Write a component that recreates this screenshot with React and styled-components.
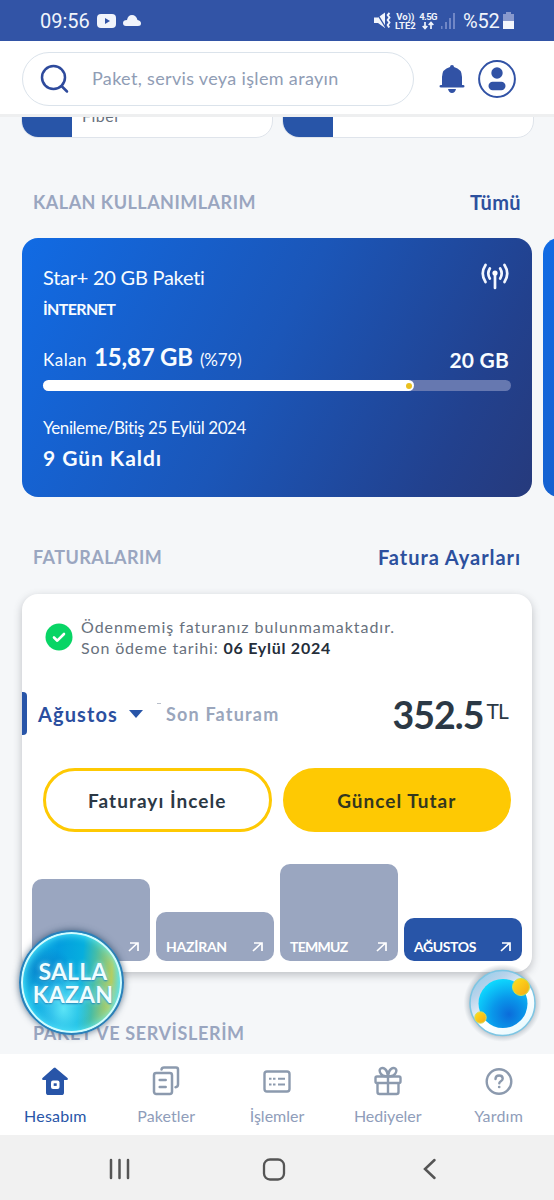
import React from 'react';
import styled, { createGlobalStyle, ThemeProvider } from 'styled-components';

const theme = {
  blue: '#2855a8',
  statusBlue: '#3254a6',
  gray: '#9aa6c0',
  dark: '#2b3845',
  yellow: '#fec903',
  background: '#f5f7f9',
};

const GlobalStyle = createGlobalStyle`
  * { box-sizing: border-box; }
  body {
    margin: 0;
    font-family: Lato, 'Open Sans', sans-serif;
    background: ${theme.background};
  }
  svg { display: block; flex-shrink: 0; }
`;

const Screen = styled.div`
  display: flex;
  flex-direction: column;
  position: relative;
  width: 554px;
  height: 1200px;
  overflow: hidden;
  background: ${(props) => props.theme.background};
`;

const Label = styled.span`
  font-size: ${(props) => props.$size}px;
  font-weight: ${(props) => (props.$bold ? 700 : 400)};
  letter-spacing: ${(props) => props.$space || 0}px;
  color: ${(props) => props.$color || 'inherit'};
  line-height: 1.2;
  white-space: nowrap;
`;

/* status bar */
const StatusBar = styled.div`
  display: flex;
  align-items: center;
  justify-content: space-between;
  flex: 0 0 41px;
  padding: 0 40px;
  font-family: Roboto, sans-serif;
  color: #f1f4fb;
  background: ${(props) => props.theme.statusBlue};
`;

const StatusGroup = styled.div`
  display: flex;
  align-items: center;
  gap: ${(props) => props.$gap}px;
`;

const Network = styled.div`
  display: flex;
  flex-direction: column;
  align-items: center;
  font-size: 9.5px;
  font-weight: 700;
  letter-spacing: ${(props) => (props.$tight ? -0.6 : 0)}px;
  line-height: 9px;
`;

const Signal = styled.svg`
  margin: 0 3px 0 1px;
`;

/* header */
const Header = styled.header`
  display: flex;
  align-items: center;
  flex: 0 0 76px;
  padding: 2px 37px 0 22px;
  background: #fff;
  border-bottom: 3px solid #eeeff0;
`;

const SearchBox = styled.div`
  display: flex;
  align-items: center;
  width: 392px;
  height: 54px;
  padding-left: 17px;
  margin-right: 25px;
  border: 1.5px solid #dbe3eb;
  border-radius: 27px;
`;

const Placeholder = styled(Label)`
  margin: 1px 0 0 22px;
`;

const BellButton = styled.div`
  width: 26px;
  margin-right: 13px;
`;

/* content */
const Content = styled.main`
  flex: 1;
  min-height: 0;
  overflow: hidden;
`;

const LineStrip = styled.div`
  display: flex;
  align-items: flex-end;
  gap: 9px;
  height: 21px;
  padding-left: 21px;
  overflow: hidden;
`;

const LineCard = styled.div`
  display: flex;
  flex: 0 0 252px;
  height: 64px;
  overflow: hidden;
  background: #fff;
  border: 1px solid #dfe4eb;
  border-radius: 17px;
`;

const LineColor = styled.div`
  width: 50px;
  background: ${(props) => props.theme.blue};
`;

const LineName = styled(Label)`
  align-self: flex-end;
  padding: 0 0 12px 10px;
`;

const SectionHead = styled.div`
  display: flex;
  align-items: center;
  justify-content: space-between;
  height: 36px;
  margin: ${(props) => props.$top}px 33px ${(props) => props.$bottom}px 33px;
`;

const SectionTitle = styled.h2`
  margin: 0;
  color: ${(props) => props.theme.gray};
  font-size: 18px;
  font-weight: 700;
  line-height: 22px;
  letter-spacing: ${(props) => props.$space}px;
`;

const CardRow = styled.div`
  display: flex;
  gap: 11px;
  padding-left: 22px;
`;

const UsageCard = styled.section`
  flex: 0 0 510px;
  height: 259px;
  padding: 27px 21px 0;
  color: #f8fcff;
  border-radius: 16px;
  background: linear-gradient(117deg, #116be4 0%, #1b56b8 48%, #22418e 83%, #263a7c 100%);
`;

const UsageHead = styled.div`
  display: flex;
  justify-content: space-between;
  height: 78px;
  padding-right: 1px;

  svg { margin-top: -2px; }
`;

const Stack = styled.div`
  display: flex;
  flex-direction: column;
  gap: ${(props) => props.$gap}px;
`;

const Amounts = styled.div`
  display: flex;
  align-items: baseline;
  height: 37px;
  padding-right: 2px;
`;

const Remaining = styled(Label)`
  margin: 0 7px;
`;

const Total = styled(Label)`
  position: relative;
  top: 2px;
  margin-left: auto;
`;

const Track = styled.div`
  height: 11px;
  margin-bottom: 27px;
  border-radius: 6px;
  background: #6678b0;
`;

const Fill = styled.div`
  display: flex;
  align-items: center;
  justify-content: flex-end;
  height: 11px;
  padding-right: 2px;
  border-radius: 6px;
  background: #fff;
`;

const FillDot = styled.i`
  width: 6px;
  height: 6px;
  border-radius: 50%;
  background: #eac01f;
`;

const BillCard = styled.section`
  width: 510px;
  height: 378px;
  margin-left: 22px;
  border-radius: 16px;
  background: #fff;
  box-shadow: 0 3px 9px rgba(70, 75, 85, 0.32);
`;

const Notice = styled.div`
  display: flex;
  align-items: center;
  gap: 8px;
  height: 98px;
  padding: 0 23px;

  & > svg { margin-top: -12px; }
  & > div { margin-top: -12px; }
`;

const BillRow = styled.div`
  display: flex;
  align-items: center;
  height: 43px;
  padding-right: 24px;
`;

const Accent = styled.div`
  width: 5px;
  height: 43px;
  margin-right: 11px;
  border-radius: 0 4px 4px 0;
  background: ${(props) => props.theme.blue};
`;

const Caret = styled.svg`
  margin-left: 11px;
`;

const Tick = styled.i`
  align-self: flex-start;
  width: 4px;
  height: 1px;
  margin: 11px 5px 0 14px;
  background: #b9bfca;
`;

const PeriodNote = styled(Label)`
  margin-top: 2px;
`;

const Price = styled.div`
  display: flex;
  align-items: flex-start;
  gap: 3px;
  margin: 2px 0 0 auto;
  color: ${(props) => props.theme.dark};
`;

const Currency = styled(Label)`
  margin-top: 6px;
`;

const Buttons = styled.div`
  display: flex;
  gap: 11px;
  padding: 33px 21px 0;
`;

const PillButton = styled.button`
  flex: 1;
  height: 64px;
  padding: 3px 0 0;
  color: ${(props) => (props.$filled ? '#33371f' : props.theme.dark)};
  font-family: inherit;
  border: 3px solid ${(props) => props.theme.yellow};
  border-radius: 32px;
  background: ${(props) => (props.$filled ? props.theme.yellow : '#fff')};
`;

const Chart = styled.div`
  display: flex;
  align-items: flex-end;
  gap: 6px;
  height: 129px;
  padding: 0 10px;
`;

const Bar = styled.div`
  display: flex;
  align-items: flex-end;
  justify-content: space-between;
  flex: 1 1 0;
  height: ${(props) => props.$height}px;
  padding: 0 11px 5px 10px;
  color: #fff;
  border-radius: 10px;
  background: ${(props) => (props.$active ? props.theme.blue : props.theme.gray)};

  svg { margin-bottom: 4px; }
`;

/* floating buttons */
const ShakeButton = styled.div`
  position: absolute;
  left: 19px;
  top: 930px;
  display: flex;
  flex-direction: column;
  align-items: center;
  justify-content: center;
  width: 105px;
  height: 105px;
  padding-left: 3px;
  border: 2px solid #2b7fb9;
  border-radius: 50%;
  color: #effdff;
  text-shadow: 0 1px 2px #1780b4, 0 0 5px #8deaff;
  background:
    radial-gradient(ellipse at 42% 76%, rgba(120, 250, 255, 0.75), transparent 34%),
    radial-gradient(ellipse at 20% 38%, rgba(4, 104, 190, 0.6), transparent 28%),
    linear-gradient(95deg, #19bfe8 0%, #049ddf 35%, #06aede 58%, #45bda8 70%, #b8cc5c 86%, #55d4df 96%);
  box-shadow: 0 0 7px rgba(30, 60, 90, 0.7), inset 0 0 0 2px #d2fcff, inset 0 0 8px 2px #5ff0ff;

  span { line-height: 23px; }
`;

const OrbButton = styled.div`
  position: absolute;
  left: 463px;
  top: 964px;
`;

/* bottom bars */
const TabBar = styled.nav`
  display: flex;
  flex: 0 0 81px;
  background: #fff;
`;

const Tab = styled.div`
  display: flex;
  flex-direction: column;
  align-items: center;
  flex: 1;
  padding-top: 12px;
  color: ${(props) => (props.$active ? props.theme.blue : '#8c9aae')};

  span {
    margin-top: 10px;
    color: ${(props) => (props.$active ? props.theme.blue : '#8f9dba')};
  }
`;

const SystemBar = styled.div`
  display: grid;
  grid-template-columns: 154px 161px auto;
  align-items: center;
  flex: 0 0 65px;
  padding: 3px 0 0 108px;
  background: #f1f1f1;
`;

const ArrowIcon = () => (
  <svg width="11" height="10" viewBox="0 0 11 10" fill="none" stroke="#fff" strokeWidth="1.7">
    <path d="M1 9 9.500 1M2 1h8v8" />
  </svg>
);

const MuteIcon = () => (
  <svg width="17" height="17" viewBox="0 0 17 17" fill="currentColor">
    <path d="M0 5.500h4L11 .5V16l-7-5H0z" />
    <path d="M2 0 12 16" stroke="#3254a6" strokeWidth="1.400" />
    <path d="m15.500 1-1.800 2 1.800 2.500L13.700 8l1.800 2.500-1.800 2.500 1.500 2.500" fill="none" stroke="currentColor" strokeWidth="1.900" />
  </svg>
);

const HomeIcon = () => (
  <svg width="28" height="30" viewBox="0 0 28 30">
    <path d="M14 1.500 26.500 12q1.200 1.700-.8 1.900H23v12.500q0 2.600-2.600 2.600H7.600Q5 29 5 26.400V13.900H2.300q-2-.2-.8-1.900L12.700 2Z" fill="currentColor" />
    <rect x="10" y="14.500" width="8.500" height="8.500" rx="2" fill="#fff" />
    <rect x="12.700" y="17.300" width="3" height="2.600" fill="currentColor" />
  </svg>
);

const PackagesIcon = () => (
  <svg width="28" height="30" viewBox="0 0 28 30" fill="none" stroke="currentColor" strokeWidth="2.500" strokeLinecap="round" strokeLinejoin="round">
    <rect x="2" y="7" width="18" height="21" rx="2.200" />
    <path d="M9.500 3.500q.3-2 2.500-2h12q2 0 2 2v15q0 2.500-2.500 2.700M7.700 14h6M7.700 21h6" />
  </svg>
);

const OperationsIcon = () => (
  <svg width="28" height="30" viewBox="0 0 28 30" fill="none" stroke="currentColor" strokeWidth="2.400">
    <rect x="1.500" y="5.500" width="25" height="20" rx="2.500" />
    <path d="M6 12.800h2.500m1.500 0h2.500M6 18.500h2.500m1.500 0h2.500M15 12.800h7M15 18.500h7" strokeWidth="2" />
  </svg>
);

const GiftIcon = () => (
  <svg width="28" height="30" viewBox="0 0 28 30" fill="none" stroke="currentColor" strokeWidth="2.400" strokeLinejoin="round">
    <rect x="1.500" y="10.500" width="25" height="6.500" rx="1.500" />
    <path d="M3.500 17v9q0 2 2 2h17q2 0 2-2v-9M14 10v18M14 10Q9 11 7 8C3.500 3 8 .5 11 3q2.500 2 3 7 .5-5 3-7c3-2.500 7.500 0 4 5q-2 3-7 2Z" />
  </svg>
);

const HelpIcon = () => (
  <svg width="28" height="30" viewBox="0 0 28 30" fill="none" stroke="currentColor" strokeWidth="2.400" strokeLinecap="round">
    <circle cx="14" cy="15.500" r="12.300" />
    <path d="M10.500 13c0-2.200 1.500-3.500 3.600-3.500s3.600 1.300 3.600 3.200c0 2.500-3.400 2.500-3.400 4.500" />
    <circle cx="14.200" cy="21" r=".6" strokeWidth="1.500" />
  </svg>
);

const TABS = [
  { name: 'Hesabım', icon: HomeIcon, space: 0.2 },
  { name: 'Paketler', icon: PackagesIcon, space: 0.1 },
  { name: 'İşlemler', icon: OperationsIcon, space: 0 },
  { name: 'Hediyeler', icon: GiftIcon, space: 0 },
  { name: 'Yardım', icon: HelpIcon, space: 0.2 },
];

const MONTHS = [
  { name: '', height: 82, space: 0 },
  { name: 'HAZİRAN', height: 49, space: -0.25 },
  { name: 'TEMMUZ', height: 97, space: -0.7 },
  { name: 'AĞUSTOS', height: 43, space: -0.4, active: true },
];

const App = () => (
  <ThemeProvider theme={theme}>
    <GlobalStyle />
    <Screen>
      <StatusBar>
        <StatusGroup $gap={7}>
          <Label $size={20}>09:56</Label>
          <svg width="46" height="16" viewBox="0 0 46 16" fill="currentColor">
            <rect x="0" y="1" width="19" height="14" rx="4" />
            <path d="m8 5 5 3-5 3z" fill="#3254a6" />
            <path d="M29 13q-3 0-3-3t4-3q1-5 5-5t5.500 5q3.500.5 3.500 3.500 0 2.500-3 2.500z" />
          </svg>
        </StatusGroup>
        <StatusGroup $gap={3.5}>
          <MuteIcon />
          <Network><span>Vo))</span><span>LTE2</span></Network>
          <Network $tight>
            <span>4.5G</span>
            <svg width="12" height="9" viewBox="0 0 12 9" fill="none" stroke="currentColor" strokeWidth="1.700">
              <path d="M3 1v6M.7 5 3 7.500 5.300 5M9 8V2M6.700 4 9 1.500 11.300 4" />
            </svg>
          </Network>
          <Signal width="15" height="16" viewBox="0 0 15 16" fill="#7187c6">
            <path d="M0 13h1.500v3H0zM4 9h2v7H4zM8 5h2v11H8zM12 0h2v16h-2z" />
          </Signal>
          <Label $size={20} $space={-0.2}>%52</Label>
          <svg width="11" height="17" viewBox="0 0 11 17">
            <path d="M3 0h5v2h3v7H0V2h3z" fill="#8899cd" />
            <path d="M0 9h11v8H0z" fill="#f3f6fc" />
          </svg>
        </StatusGroup>
      </StatusBar>

      <Header>
        <SearchBox>
          <svg width="30" height="30" viewBox="0 0 30 30" fill="none" stroke="#2e4a9c" strokeWidth="2.500" strokeLinecap="round">
            <circle cx="13.500" cy="13.500" r="11.500" />
            <path d="m21.500 22 5.500 5.500" />
          </svg>
          <Placeholder $size={18} $space={0.34} $color="#909db5">Paket, servis veya işlem arayın</Placeholder>
        </SearchBox>
        <BellButton>
          <svg width="26" height="30" viewBox="0 0 26 30" fill="#3152a5">
            <path d="M11 3q0-2 2-2t2 2q8 2 8 10v8h1q1.500 0 1.500 1.200T24 23.400H2Q.5 23.400.5 22.200T2 21h1v-8Q3 5 11 3ZM9 25h8q-1 4-4 4t-4-4Z" />
          </svg>
        </BellButton>
        <svg width="38" height="38" viewBox="0 0 38 38" fill="#3152a5">
          <circle cx="19" cy="19" r="17.900" fill="none" stroke="#3152a5" strokeWidth="2" />
          <circle cx="19" cy="13" r="5.700" />
          <rect x="10.500" y="21.800" width="17" height="8.500" rx="4.200" />
        </svg>
      </Header>

      <Content>
        <LineStrip>
          <LineCard>
            <LineColor />
            <LineName $size={16} $space={0.5} $color="#68717d">Fiber</LineName>
          </LineCard>
          <LineCard><LineColor /></LineCard>
        </LineStrip>

        <SectionHead $top={46} $bottom={18}>
          <SectionTitle $space={0.48}>KALAN KULLANIMLARIM</SectionTitle>
          <Label $size={20} $bold $space={0.4} $color="#2c509e">Tümü</Label>
        </SectionHead>
        <CardRow>
          <UsageCard>
            <UsageHead>
              <Stack $gap={10}>
                <Label $size={20} $space={-0.25}>Star+ 20 GB Paketi</Label>
                <Label $size={16} $bold $space={-0.65}>İNTERNET</Label>
              </Stack>
              <svg width="30" height="28" viewBox="0 0 30 28" fill="none" stroke="#f2f6ff" strokeWidth="2.700" strokeLinecap="round">
                <path d="M15 10.500v14.500M5.500 2q-5.500 8.500 0 17M24.500 2q5.500 8.500 0 17M9.800 5.500q-3 5 0 10M20.200 5.500q3 5 0 10" />
                <circle cx="15" cy="10" r="2.600" fill="#fff" stroke="none" />
              </svg>
            </UsageHead>
            <Amounts>
              <Label $size={17} $space={0.5}>Kalan</Label>
              <Remaining $size={24} $bold $space={-0.2}>15,87 GB</Remaining>
              <Label $size={17} $space={-0.1}>(%79)</Label>
              <Total $size={21} $bold $space={0.2}>20 GB</Total>
            </Amounts>
            <Track><Fill style={{ width: '79.3%' }}><FillDot /></Fill></Track>
            <Stack $gap={7}>
              <Label $size={17} $space={-0.44}>Yenileme/Bitiş 25 Eylül 2024</Label>
              <Label $size={21} $bold $space={0.95}>9 Gün Kaldı</Label>
            </Stack>
          </UsageCard>
          <UsageCard />
        </CardRow>

        <SectionHead $top={42} $bottom={19}>
          <SectionTitle $space={0.43}>FATURALARIM</SectionTitle>
          <Label $size={20} $bold $space={0.94} $color="#2c509e">Fatura Ayarları</Label>
        </SectionHead>
        <BillCard>
          <Notice>
            <svg width="28" height="28" viewBox="0 0 28 28">
              <circle cx="14" cy="14" r="13.500" fill="#08d565" />
              <path d="m9 14.500 3.300 3.200L19 11" fill="none" stroke="#fff" strokeWidth="2.600" strokeLinecap="round" strokeLinejoin="round" />
            </svg>
            <Stack $gap={2}>
              <Label $size={16} $space={0.95} $color="#68717d">Ödenmemiş faturanız bulunmamaktadır.</Label>
              <Label $size={16} $space={0.85} $color="#68717d">
                Son ödeme tarihi: <Label as="b" $size={16} $bold $space={0.75} $color="#252e3a">06 Eylül 2024</Label>
              </Label>
            </Stack>
          </Notice>
          <BillRow>
            <Accent />
            <Label $size={20} $bold $space={1.1} $color="#2b4f9f">Ağustos</Label>
            <Caret width="14" height="8" viewBox="0 0 14 8">
              <path d="M0 0h14L7 8z" fill="#2855a8" />
            </Caret>
            <Tick />
            <PeriodNote $size={18} $bold $space={1.2} $color="#9aa6bc">Son Faturam</PeriodNote>
            <Price>
              <Label $size={37.5} $bold $space={-1}>352.5</Label>
              <Currency $size={21} $space={-0.8}>TL</Currency>
            </Price>
          </BillRow>
          <Buttons>
            <PillButton><Label $size={19} $bold $space={1.05}>Faturayı İncele</Label></PillButton>
            <PillButton $filled><Label $size={19} $bold $space={1}>Güncel Tutar</Label></PillButton>
          </Buttons>
          <Chart>
            {MONTHS.map((month) => (
              <Bar key={month.height} $height={month.height} $active={month.active}>
                <Label $size={14} $bold $space={month.space}>{month.name}</Label>
                <ArrowIcon />
              </Bar>
            ))}
          </Chart>
        </BillCard>

        <SectionHead $top={43} $bottom={0}>
          <SectionTitle $space={0.62}>PAKET VE SERVİSLERİM</SectionTitle>
        </SectionHead>
      </Content>

      <TabBar>
        {TABS.map(({ name, icon: Icon, space }, index) => (
          <Tab key={name} $active={index === 0}>
            <Icon />
            <Label $size={16} $space={space}>{name}</Label>
          </Tab>
        ))}
      </TabBar>
      <SystemBar>
        <svg width="23" height="22" viewBox="0 0 23 22" stroke="#555" strokeWidth="2.500" strokeLinecap="round">
          <path d="M3 2v18M11.500 2v18M20 2v18" />
        </svg>
        <svg width="24" height="23" viewBox="0 0 24 23" fill="none" stroke="#555" strokeWidth="2.300">
          <rect x="2" y="1.500" width="20" height="20" rx="6" />
        </svg>
        <svg width="14" height="22" viewBox="0 0 14 22" fill="none" stroke="#555" strokeWidth="2.500" strokeLinecap="round">
          <path d="m11.500 2-9.500 9 9.500 9" />
        </svg>
      </SystemBar>

      <ShakeButton>
        <Label $size={23} $bold $space={0.2}>SALLA</Label>
        <Label $size={23} $bold $space={0.2}>KAZAN</Label>
      </ShakeButton>
      <OrbButton>
        <svg width="80" height="78" viewBox="0 0 80 78">
          <defs>
            <radialGradient id="halo" cx="50%" cy="50%" r="50%">
              <stop offset="80%" stopColor="#5d6f80" stopOpacity=".45" />
              <stop offset="100%" stopColor="#8b98a5" stopOpacity="0" />
            </radialGradient>
            <linearGradient id="shell" x1="0" y1="0" x2=".7" y2="1">
              <stop offset="0" stopColor="#82caea" />
              <stop offset=".3" stopColor="#b8d3eb" />
              <stop offset=".65" stopColor="#fff" />
              <stop offset="1" stopColor="#e8faff" />
            </linearGradient>
            <radialGradient id="core" cx="62%" cy="72%" r="75%">
              <stop offset="0" stopColor="#0b6cda" />
              <stop offset=".45" stopColor="#0997ea" />
              <stop offset="1" stopColor="#0edaff" />
            </radialGradient>
            <linearGradient id="gold" x1="0" y1="0" x2="1" y2="1">
              <stop offset="0" stopColor="#ffe21c" />
              <stop offset="1" stopColor="#f4a714" />
            </linearGradient>
          </defs>
          <circle cx="39.500" cy="39" r="39" fill="url(#halo)" />
          <circle cx="39.500" cy="39" r="32.500" fill="url(#shell)" stroke="#7cc6e4" strokeWidth="1.500" />
          <circle cx="40" cy="39.500" r="24.500" fill="url(#core)" />
          <circle cx="58" cy="23" r="8.500" fill="url(#gold)" stroke="#cbe34e" />
          <circle cx="17.500" cy="53.500" r="5.700" fill="url(#gold)" stroke="#d8dd5a" />
        </svg>
      </OrbButton>
    </Screen>
  </ThemeProvider>
);

export default App;
